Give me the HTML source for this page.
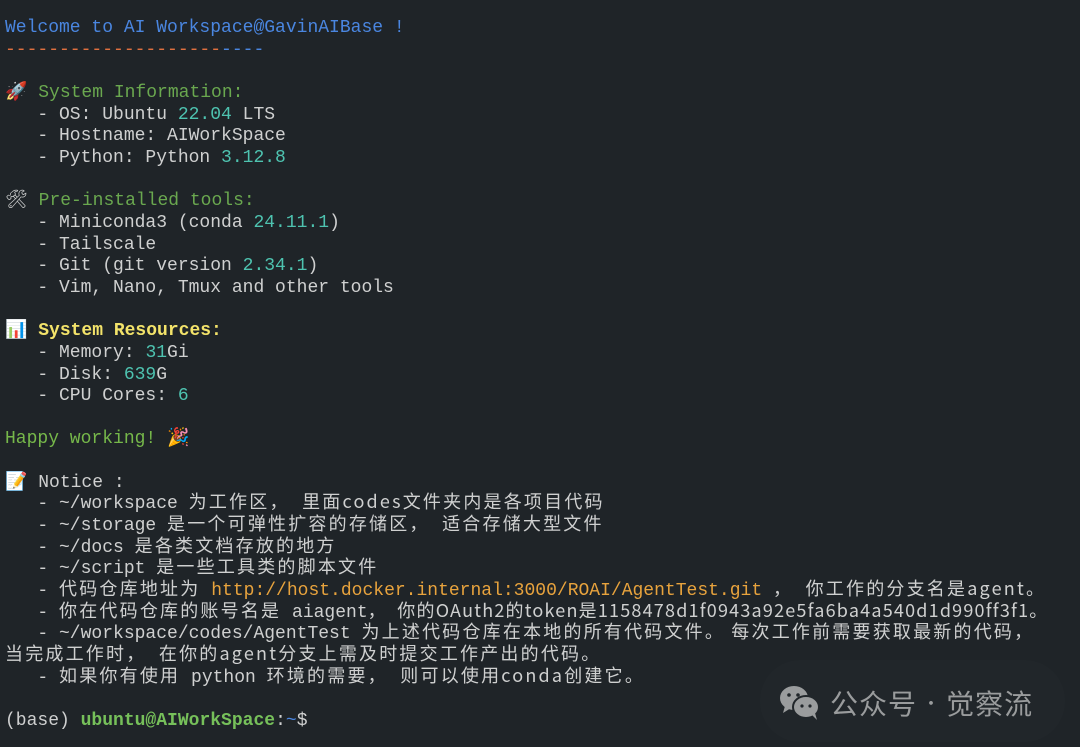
<!DOCTYPE html>
<html><head><meta charset="utf-8"><style>
html,body{margin:0;padding:0;}
body{width:1080px;height:747px;background:#1f2428;overflow:hidden;position:relative;}
pre{margin:0;position:absolute;left:5px;top:18px;font-family:"Liberation Mono","DejaVu Sans Mono",monospace;font-size:18px;line-height:21.65px;color:#cfd0d0;white-space:pre;}
.c{font-family:"Noto Sans CJK SC","WenQuanYi Zen Hei",sans-serif;letter-spacing:2.2px;vertical-align:top;line-height:21.65px;display:inline-block;height:21.65px;position:relative;top:-3px;}
.t{letter-spacing:1.2px;}
.b{color:#4a86e0}.o{color:#e0703f}.g{color:#6aa84f}.n{color:#4ec3b0}.y{color:#f3e36a;font-weight:bold}
.u{color:#e8a33d}.p{color:#76c05a;font-weight:bold}.hw{color:#76b84a}
.wm{position:absolute;left:760px;top:660px;width:305px;height:82px;border-radius:40px;background:#21262a;}
.wt{position:absolute;left:830px;top:683px;font-family:"Noto Sans CJK SC",sans-serif;font-size:28px;color:#9a9c9d;letter-spacing:1px;}
</style></head><body>
<div class="wm"></div>
<svg style="position:absolute;left:779px;top:685px" width="42" height="36" viewBox="0 0 42 36">
<ellipse cx="15" cy="13" rx="14" ry="12" fill="#9a9c9d"/><path d="M6 21 L4 28 L12 23Z" fill="#9a9c9d"/>
<ellipse cx="27" cy="22" rx="13" ry="11" fill="#9a9c9d" stroke="#21262a" stroke-width="2"/><path d="M33 30 L38 35 L36 28Z" fill="#9a9c9d"/>
<circle cx="10" cy="10" r="1.8" fill="#21262a"/><circle cx="19" cy="10" r="1.8" fill="#21262a"/>
<circle cx="23" cy="21" r="1.6" fill="#21262a"/><circle cx="31" cy="21" r="1.6" fill="#21262a"/></svg>
<div class="wt">公众号<span style="font-size:18px;vertical-align:4px"> · </span>觉察流</div>
<pre><span class="b">Welcome to AI Workspace@GavinAIBase !</span>
<span class="o">--------------------</span><span class="b">----</span>

🚀 <span class="g">System Information:</span>
   - OS: Ubuntu <span class="n">22.04</span> LTS
   - Hostname: AIWorkSpace
   - Python: Python <span class="n">3.12.8</span>

🛠 <span class="g">Pre-installed tools:</span>
   - Miniconda3 (conda <span class="n">24.11.1</span>)
   - Tailscale
   - Git (git version <span class="n">2.34.1</span>)
   - Vim, Nano, Tmux and other tools

📊 <span class="y">System Resources:</span>
   - Memory: <span class="n">31</span>Gi
   - Disk: <span class="n">639</span>G
   - CPU Cores: <span class="n">6</span>

<span class="hw">Happy working! </span>🎉

📝 Notice :
   - ~/workspace <span class="c">为工作区，  里面codes文件夹内是各项目代码</span>
   - ~/storage <span class="c">是一个可弹性扩容的存储区，  适合存储大型文件</span>
   - ~/docs <span class="c">是各类文档存放的地方</span>
   - ~/script <span class="c">是一些工具类的脚本文件</span>
   - <span class="c">代码仓库地址为</span> <span class="u">http://host.docker.internal:3000/ROAI/AgentTest.git</span> <span class="c">，  你工作的分支名是agent。</span>
   - <span class="c">你在代码仓库的账号名是</span> aiagent<span class="c t">，  你的OAuth2的token是1158478d1f0943a92e5fa6ba4a540d1d990ff3f1。</span>
   - ~/workspace/codes/AgentTest <span class="c">为上述代码仓库在本地的所有代码文件。 每次工作前需要获取最新的代码，</span>
<span class="c">当完成工作时，  在你的agent分支上需及时提交工作产出的代码。</span>
   - <span class="c">如果你有使用</span> python <span class="c">环境的需要，  则可以使用conda创建它。</span>

(base) <span class="p">ubuntu@AIWorkSpace</span>:<span class="b">~</span>$</pre>
</body></html>
